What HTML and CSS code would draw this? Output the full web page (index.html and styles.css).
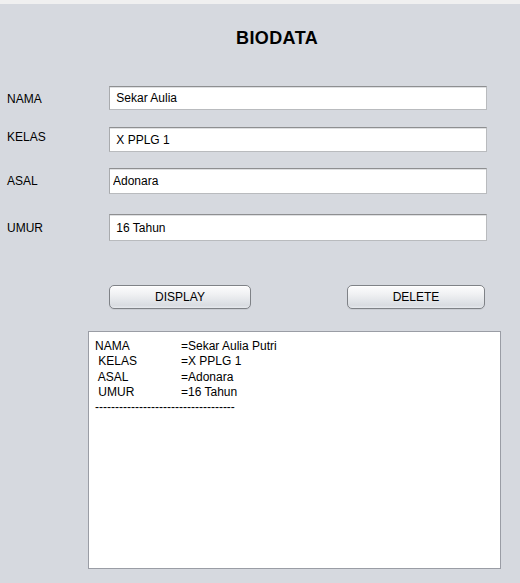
FILE: index.html
```html
<!DOCTYPE html>
<html>
<head>
<meta charset="utf-8">
<link rel="stylesheet" href="styles.css">
</head>
<body>
<div class="strip"></div>
<main class="panel">
  <h1 class="title">BIODATA</h1>
  <div class="row row-nama">
    <label class="lbl lbl-nama">NAMA</label>
    <input class="field h24" type="text" value=" Sekar Aulia">
  </div>
  <div class="row row-kelas">
    <label class="lbl lbl-kelas">KELAS</label>
    <input class="field h25" type="text" value=" X PPLG 1">
  </div>
  <div class="row row-asal">
    <label class="lbl">ASAL</label>
    <input class="field h26" type="text" value="Adonara">
  </div>
  <div class="row row-umur">
    <label class="lbl">UMUR</label>
    <input class="field h27" type="text" value=" 16 Tahun">
  </div>
  <div class="buttons">
    <button class="btn btn-display">DISPLAY</button>
    <button class="btn btn-delete">DELETE</button>
  </div>
  <div class="output">
    <div class="out-grid">
      <span>NAMA</span><span>=Sekar Aulia Putri</span>
      <span> KELAS</span><span>=X PPLG 1</span>
      <span> ASAL</span><span>=Adonara</span>
      <span> UMUR</span><span>=16 Tahun</span>
    </div>
    <div class="dashes">-----------------------------------</div>
  </div>
</main>
</body>
</html>
```

FILE: styles.css
```css
* { box-sizing: border-box; }
html, body {
  margin: 0;
  padding: 0;
  height: 100%;
}
body {
  font-family: "Liberation Sans", Arial, sans-serif;
  font-size: 12px;
  color: #000;
  background: #d6d9df;
  display: flex;
  flex-direction: column;
}
.strip {
  height: 4px;
  background: #f0f0f0;
  flex: none;
}
.panel {
  flex: 1;
  background: #d6d9df;
  display: flex;
  flex-direction: column;
}
.title {
  margin: 24px 0 0 0;
  padding-left: 236px;
  font-size: 18px;
  line-height: 20px;
  font-weight: bold;
  letter-spacing: 0.4px;
}
.row {
  display: flex;
  align-items: center;
}
.row-nama { margin-top: 38px; }
.row-kelas { margin-top: 17px; }
.row-asal { margin-top: 16px; }
.row-umur { margin-top: 20px; }
.lbl {
  width: 109px;
  padding-left: 7px;
  line-height: 14px;
}
.lbl-nama { margin-top: 2px; }
.lbl-kelas { margin-bottom: 6px; }
.field {
  width: 378px;
  margin: 0;
  padding: 0 3px;
  font-family: "Liberation Sans", Arial, sans-serif;
  font-size: 12px;
  color: #000;
  background: #fff;
  border: 1px solid;
  border-color: #8e8f91 #b9bbbe #b9bbbe #a9abae;
  box-shadow: inset 0 1px 0 #dfe0e2;
  outline: none;
  border-radius: 0;
}
.h24 { height: 24px; }
.h25 { height: 25px; }
.h26 { height: 26px; }
.h27 { height: 27px; }
.buttons {
  display: flex;
  margin-top: 44px;
  padding-left: 109px;
  gap: 96px;
}
.btn {
  height: 24px;
  margin: 0;
  padding: 0;
  font-family: "Liberation Sans", Arial, sans-serif;
  font-size: 12px;
  color: #000;
  border: 1px solid #7f8287;
  border-radius: 5px;
  background: linear-gradient(#fcfcfd 0%, #f1f2f4 35%, #e1e4e8 70%, #d9dce1 88%, #e6e9ed 100%);
  box-shadow: inset 0 1px 0 #ffffff, 0 1px 0 #c9ccd2;
}
.btn-display { width: 142px; }
.btn-delete { width: 138px; }
.output {
  margin: 22px 0 0 88px;
  width: 413px;
  height: 238px;
  background: #fff;
  border: 1px solid #9a9da5;
  padding: 7px 6px;
  line-height: 15.33px;
}
.out-grid {
  display: grid;
  grid-template-columns: 86px auto;
}
.out-grid span {
  white-space: pre;
}
.dashes {
  white-space: nowrap;
}
```
